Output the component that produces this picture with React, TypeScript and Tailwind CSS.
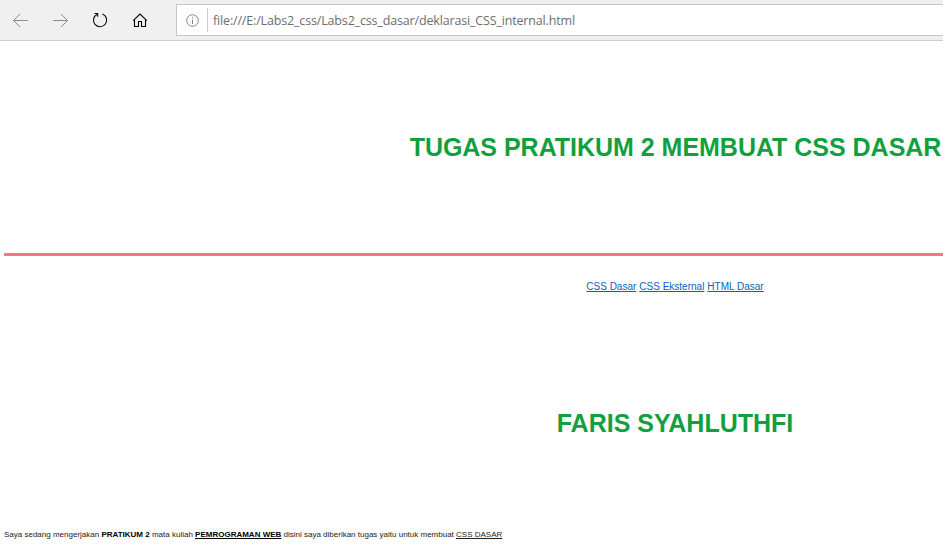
import React from "react";

function BackIcon() {
  return (
    <svg width="16" height="14" viewBox="0 0 16 14" fill="none" stroke="#8c8c8c" strokeWidth="1">
      <path d="M1.5 7.5H16M8 1L1.5 7.5L8 14" />
    </svg>
  );
}

function ForwardIcon() {
  return (
    <svg width="16" height="14" viewBox="0 0 16 14" fill="none" stroke="#8c8c8c" strokeWidth="1">
      <path d="M1 7.5H15.5M9 1L15.5 7.5L9 14" />
    </svg>
  );
}

function RefreshIcon() {
  return (
    <svg width="16" height="16" viewBox="0 0 16 16" fill="none" stroke="#111111" strokeWidth="1.15">
      <path d="M10.5 2A6.6 6.6 0 1 1 5.2 2.2M2.5 1.5H5.6V4.8" />
    </svg>
  );
}

function HomeIcon() {
  return (
    <svg width="16" height="16" viewBox="0 0 16 16" fill="none" stroke="#000000" strokeWidth="1.1">
      <path d="M1.2 8.7L8 2.1L14.8 8.7M2.5 7.6V14.5H6.5V9.5H9.5V14.5H13.5V7.6" />
    </svg>
  );
}

function InfoIcon() {
  return (
    <svg width="13" height="13" viewBox="0 0 13 13" fill="none" stroke="#858585" strokeWidth="1">
      <circle cx="6.5" cy="6.5" r="5.8" />
      <path d="M6.5 5.5V10M6.5 3V4.2" />
    </svg>
  );
}

function Toolbar() {
  return (
    <header className="flex h-[41px] items-start border-b border-[#cccccc] bg-[#f0f0f0]">
      <div className="flex h-10 w-44 shrink-0 items-center gap-6 pl-3">
        <BackIcon />
        <ForwardIcon />
        <RefreshIcon />
        <HomeIcon />
      </div>
      <div className="mt-1 flex h-8 grow items-center border-y border-l border-[#c8c8c8] bg-white pl-[9px]">
        <InfoIcon />
        <span className="ml-2 h-6 w-px bg-[#cccccc]" />
        <span className="ml-[5px] pt-0.5 whitespace-nowrap font-['Open_Sans','Noto_Sans',sans-serif] text-[12.5px] leading-5 tracking-[-0.16px] text-[#6d6d6d]">
          file:///E:/Labs2_css/Labs2_css_dasar/deklarasi_CSS_internal.html
        </span>
      </div>
    </header>
  );
}

export default function App() {
  return (
    <div className="h-[546px] w-full overflow-hidden bg-white font-['Liberation_Sans',Arial,sans-serif]">
      <Toolbar />
      <main className="ml-1 w-[1342px]">
        <div className="flex h-[212px] items-center justify-center">
          <h1 className="whitespace-nowrap pl-px text-[25px] leading-[30px] font-bold tracking-[-0.02px] text-[#129f3d]">
            TUGAS PRATIKUM 2 MEMBUAT CSS DASAR
          </h1>
        </div>
        <hr className="h-[3px] border-0 bg-[#f07880]" />
        <nav className="mt-6 flex h-3.5 justify-center gap-[3px] text-[10px] leading-[14px] text-[#0563c1]">
          <a className="underline" href="#dasar">CSS Dasar</a>
          <a className="underline" href="#eksternal">CSS Eksternal</a>
          <a className="underline" href="#html">HTML Dasar</a>
        </nav>
        <h2 className="mt-[114px] text-center text-[25px] leading-[30px] font-bold text-[#129f3d]">
          FARIS SYAHLUTHFI
        </h2>
        <p className="mt-[91px] whitespace-nowrap text-[8px] leading-[12px] text-[#222222]">
          Saya sedang mengerjakan <b className="text-black">PRATIKUM 2</b> mata kuliah{" "}
          <b className="text-black underline">PEMROGRAMAN WEB</b> disini saya diberikan tugas yaitu untuk membuat{" "}
          <u>CSS DASAR</u>
        </p>
      </main>
    </div>
  );
}
